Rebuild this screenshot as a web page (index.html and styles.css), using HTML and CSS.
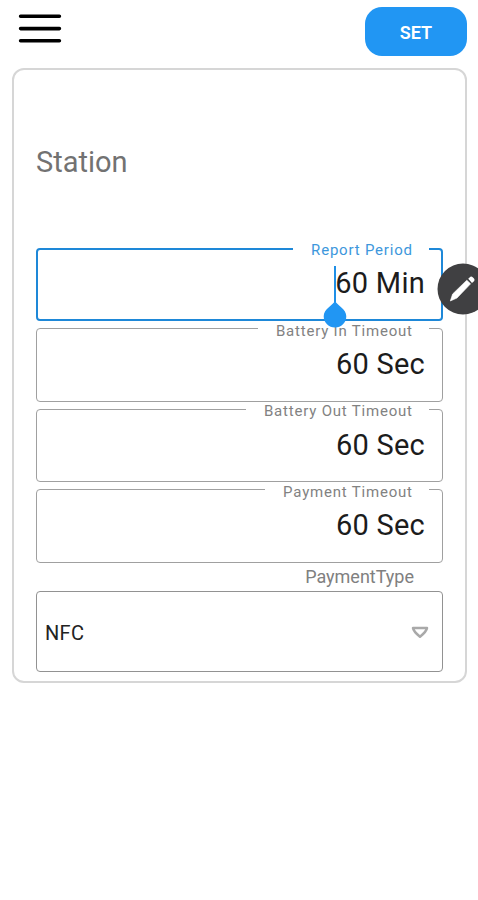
FILE: index.html
```html
<!DOCTYPE html>
<html lang="en">
<head>
<meta charset="utf-8">
<title>Station</title>
<link rel="stylesheet" href="styles.css">
</head>
<body>
<header class="bar">
  <svg class="menu" width="44" height="32" viewBox="0 0 44 32"><path d="M2.6 3.2H41.4M2.6 15.6H41.4M2.6 27.8H41.4" stroke="#000" stroke-width="3.6" stroke-linecap="round"/></svg>
  <button class="set">SET</button>
</header>
<main class="card">
  <h1 class="title">Station</h1>
  <fieldset class="field active">
    <legend>Report Period</legend>
    <div class="value">60 Min</div>
    <svg class="caret" width="24" height="62" viewBox="0 0 24 62"><path d="M12 0V40" stroke="#1f8fe6" stroke-width="2"/><path d="M12 35C14 39 23.3 43 23.3 50.2A11.3 11.3 0 0 1 .7 50.2C.7 43 10 39 12 35Z" fill="#2196f3"/></svg>
    <svg class="edit" width="52" height="52" viewBox="0 0 52 52"><circle cx="26" cy="26" r="25.5" fill="#404042"/><path d="M13.3 38L15.6 31L29.8 17.2L33.6 20.8L20 35Z" fill="#fff" stroke="#fff" stroke-width=".6" stroke-linejoin="round"/><path d="M31.2 15.8L33.4 13.8Q34.6 13.2 35.7 14.3L37 15.6Q38 16.8 37.2 17.9L35 20Z" fill="#fff"/></svg>
  </fieldset>
  <fieldset class="field">
    <legend>Battery In Timeout</legend>
    <div class="value">60 Sec</div>
  </fieldset>
  <fieldset class="field">
    <legend>Battery Out Timeout</legend>
    <div class="value">60 Sec</div>
  </fieldset>
  <fieldset class="field">
    <legend>Payment Timeout</legend>
    <div class="value">60 Sec</div>
  </fieldset>
  <div class="label">PaymentType</div>
  <div class="select">
    <span>NFC</span>
    <svg width="18" height="13" viewBox="0 0 18 13"><path d="M2 2H16Q15.5 5.5 9 10.7Q2.5 5.5 2 2Z" fill="none" stroke="#a9a9a9" stroke-width="2.5" stroke-linejoin="round"/></svg>
  </div>
</main>
</body>
</html>
```
FILE: styles.css
```css
* { box-sizing: border-box; }
body {
  margin: 0;
  height: 900px;
  overflow: hidden;
  background: #fff;
  font-family: Roboto, "Liberation Sans", sans-serif;
}
.bar {
  display: flex;
  justify-content: space-between;
  align-items: flex-start;
  height: 68px;
  padding: 7px 11px 0 18px;
}
.menu { margin-top: 6px; }
.set {
  width: 102px;
  height: 49px;
  padding: 1px 0 0;
  border: 0;
  border-radius: 17px;
  background: #2196f3;
  color: #fff;
  font: 600 18px Roboto, sans-serif;
}
.card {
  width: 455px;
  height: 615px;
  margin-left: 12px;
  padding: 0 22px;
  border: 2px solid #d6d6d6;
  border-radius: 12px;
}
.title {
  margin: 0;
  height: 170px;
  padding-top: 75px;
  color: #727272;
  font-size: 29px;
  font-weight: 400;
  line-height: 34px;
}
.field {
  position: relative;
  min-width: 0;
  height: 82px;
  margin: 0 0 -1.4px;
  padding: 0 13px;
  border: 1px solid #a0a0a0;
  border-radius: 4px;
}
.field + .field { top: -1px; }
.field legend {
  height: 18px;
  margin-left: auto;
  padding: 2px 16.2px 0 18px;
  color: #828282;
  font-size: 15px;
  line-height: 18px;
  letter-spacing: .8px;
}
.value {
  margin-top: 8.5px;
  padding-right: 4px;
  color: #1c1c1c;
  font-size: 29px;
  line-height: 36px;
  letter-spacing: .25px;
  text-align: right;
}
.active { z-index: 1; height: 81px; margin-bottom: -.4px; border: 2px solid #1e88d8; padding: 0 12px; }
.field.active legend { padding-top: 1px; color: #3d97dc; }
.active .value { margin-top: 7px; }
.caret { position: absolute; left: 285px; top: 8px; }
.edit { position: absolute; left: 399px; top: 5px; }
.label {
  height: 28px;
  margin-top: 1px;
  padding-right: 29px;
  color: #808080;
  font-size: 18px;
  line-height: 28px;
  text-align: right;
}
.select {
  display: flex;
  align-items: center;
  justify-content: space-between;
  height: 81px;
  padding: 2px 13px 0 8px;
  border: 1.5px solid #929292;
  border-radius: 4px;
  color: #222;
  font-size: 20px;
  letter-spacing: .3px;
}
```
